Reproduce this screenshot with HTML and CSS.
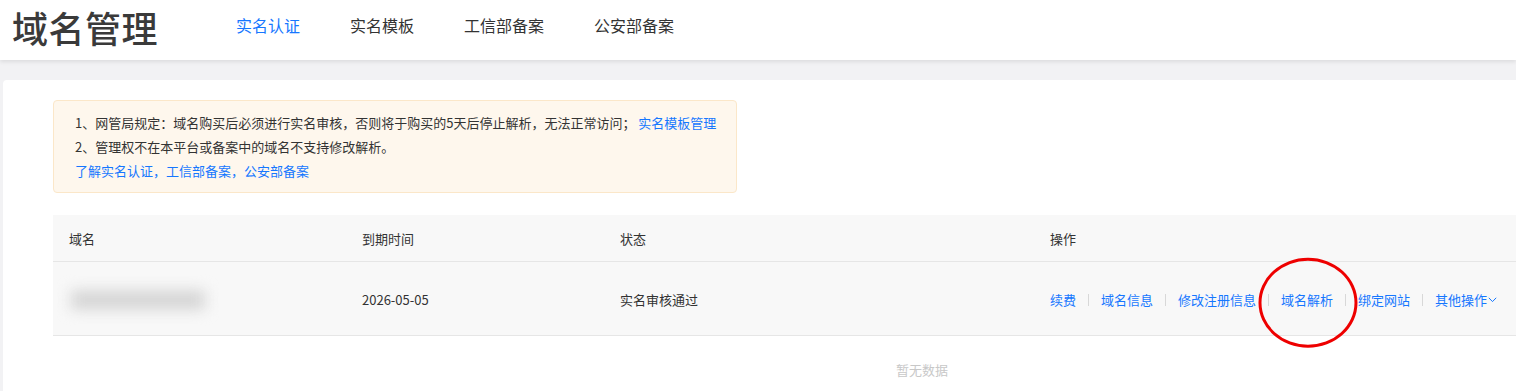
FILE: index.html
```html
<!DOCTYPE html>
<html lang="zh-CN">
<head>
  <meta charset="UTF-8">
  <meta name="viewport" content="width=device-width, initial-scale=1.0">
  <title>域名管理</title>
  <link rel="stylesheet" href="styles.css">
</head>
<body>

  <header class="top-bar">
    <h1 class="page-title">域名管理</h1>
    <nav class="top-nav">
      <a href="#" class="nav-item active">实名认证</a>
      <a href="#" class="nav-item">实名模板</a>
      <a href="#" class="nav-item">工信部备案</a>
      <a href="#" class="nav-item">公安部备案</a>
    </nav>
  </header>

  <main class="page-body">
    <div class="panel">

      <div class="notice">
        <p>1、网管局规定：域名购买后必须进行实名审核，否则将于购买的5天后停止解析，无法正常访问； <a href="#">实名模板管理</a></p>
        <p>2、管理权不在本平台或备案中的域名不支持修改解析。</p>
        <p><a href="#">了解实名认证，工信部备案，公安部备案</a></p>
      </div>

      <div class="domain-table">
        <div class="table-row table-head">
          <div class="cell first">域名</div>
          <div class="cell">到期时间</div>
          <div class="cell">状态</div>
          <div class="cell">操作</div>
        </div>
        <div class="table-row table-item">
          <div class="cell first"><span class="blurred-name"></span></div>
          <div class="cell">2026-05-05</div>
          <div class="cell">实名审核通过</div>
          <div class="cell actions">
            <a href="#">续费</a><span class="sep"></span>
            <a href="#">域名信息</a><span class="sep"></span>
            <a href="#">修改注册信息</a><span class="sep"></span>
            <a href="#" class="marked">域名解析<span class="ring"></span></a><span class="sep"></span>
            <a href="#">绑定网站</a><span class="sep"></span>
            <a href="#" class="more">其他操作<svg width="9" height="6" viewBox="0 0 9 6"><path d="M0.8 0.8 L4.5 4.6 L8.2 0.8" fill="none" stroke="currentColor" stroke-width="1"/></svg></a>
          </div>
        </div>
        <div class="empty-text">暂无数据</div>
      </div>

    </div>
  </main>

</body>
</html>
```

FILE: styles.css
```css
*{
  margin: 0;
  padding: 0;
  box-sizing: border-box;
}

body{
  font-family: "Noto Sans CJK SC", "Noto Sans", sans-serif;
  background-color: #f2f2f4;
  color: #333;
  overflow: hidden;
  width: 1516px;
}

a{
  color: #1677ff;
  text-decoration: none;
}

/* header */
.top-bar{
  height: 60px;
  background-color: white;
  display: flex;
  align-items: center;
  padding-left: 12px;
  box-shadow: 0 2px 4px rgba(0, 0, 0, 0.09);
  position: relative;
}

.page-title{
  font-size: 36px;
  font-weight: 500;
  color: #3a3a3a;
  line-height: 1;
  margin-top: -6px;
  width: 224px;
  letter-spacing: 0.5px;
}

.top-nav{
  display: flex;
  column-gap: 50px;
  margin-top: -10px;
}

.nav-item{
  font-size: 16px;
  color: #333;
}

.nav-item.active{
  color: #1677ff;
}

/* body */
.page-body{
  padding: 20px 0 0 3px;
}

.panel{
  background-color: white;
  border-radius: 4px 0 0 0;
  padding: 20px 0 0 50px;
  height: 320px;
}

.notice{
  width: 684px;
  background-color: #fef7ed;
  border: 1px solid #fbe7c9;
  border-radius: 4px;
  padding: 10px 18px 9px 21px;
  font-size: 13px;
  line-height: 24px;
  color: #333;
  white-space: nowrap;
}

.domain-table{
  width: 1738px;
  margin-top: 22px;
  font-size: 13px;
}

.table-row{
  display: grid;
  grid-template-columns: 309px 258px 430px 1fr;
  align-items: center;
  background-color: #f8f8f8;
  border-bottom: 1px solid #e6e6e6;
}

.table-head{
  height: 47px;
}

.table-item{
  height: 74px;
  padding-top: 2px;
}

.cell.first{
  padding-left: 16px;
}

.blurred-name{
  display: block;
  width: 134px;
  height: 20px;
  margin-left: 2px;
  background-color: #d6d6d6;
  filter: blur(7px);
}

.actions{
  display: flex;
  align-items: center;
}

.sep{
  width: 1px;
  height: 12px;
  background-color: #d8d8d8;
  margin: 0 12px;
}

.marked{
  position: relative;
}

.ring{
  position: absolute;
  left: 50%;
  top: 50%;
  width: 99px;
  height: 90px;
  border: 3px solid #ee0000;
  border-radius: 50%;
  transform: translate(-49%, -47%);
  pointer-events: none;
}

.more{
  display: flex;
  align-items: center;
  column-gap: 1px;
}

.empty-text{
  text-align: center;
  color: #c8c8c8;
  font-size: 13px;
  padding-top: 24px;
}
```
